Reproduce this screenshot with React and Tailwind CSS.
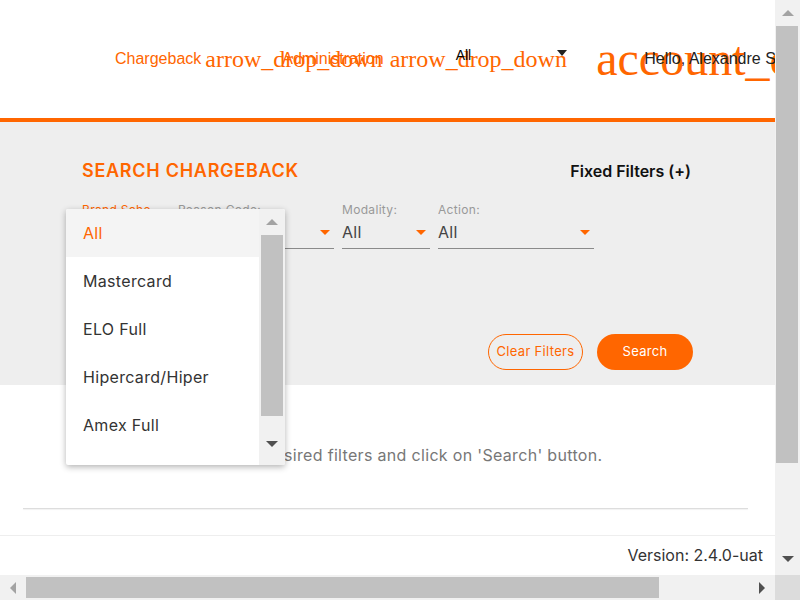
const ORANGE = '#ff6600'

const OPTIONS = ['All', 'Mastercard', 'ELO Full', 'Hipercard/Hiper', 'Amex Full']

const FILTERS = [
  { label: 'Brand Scheme:', width: 'w-[88px]', active: true },
  { label: 'Reason Code:', width: 'w-[156px]' },
  { label: 'Modality:', width: 'w-[88px]' },
  { label: 'Action:', width: 'w-[156px]' },
]

function Tri({ dir = 'down', color, w = 10, h = 5 }) {
  const pts = {
    down: `0,0 ${w},0 ${w / 2},${h}`,
    up: `0,${h} ${w},${h} ${w / 2},0`,
    left: `${w},0 ${w},${h} 0,${h / 2}`,
    right: `0,0 0,${h} ${w},${h / 2}`,
  }[dir]
  return (
    <svg width={w} height={h} viewBox={`0 0 ${w} ${h}`} className="block shrink-0">
      <polygon points={pts} fill={color} />
    </svg>
  )
}

function Header() {
  return (
    <header className="flex h-[122px] shrink-0 items-center border-b-4 border-[#ff6600] bg-white font-['Liberation_Sans',Arial,sans-serif] tracking-normal whitespace-nowrap">
      <span className="ml-[115px] text-[16px] leading-none text-[#ff6600]">Chargeback</span>
      <span className="ml-[4px] w-[24px] font-['Liberation_Serif',serif] text-[24px] leading-none text-[#ff6600]">
        arrow_drop_down
      </span>
      <span className="ml-[53px] text-[16px] leading-none text-[#ff6600]">Administration</span>
      <span className="ml-[6px] w-[24px] font-['Liberation_Serif',serif] text-[24px] leading-none text-[#ff6600]">
        arrow_drop_down
      </span>
      <span className="mb-[8px] ml-[42px] text-[14px] leading-none text-black">All</span>
      <span className="mb-[12px] ml-[86px]">
        <Tri color="#222" w={10} h={6} />
      </span>
      <span className="ml-[15px] h-[46px] w-px bg-[#e2e2e2]" />
      <span className="ml-[14px] w-[48px] font-['Liberation_Serif',serif] text-[48px] leading-none text-[#ff6600]">
        account_circle
      </span>
      <span className="text-[16px] leading-none text-[#222]">Hello, Alexandre Silva</span>
    </header>
  )
}

function FilterField({ field }) {
  return (
    <div className={field.width}>
      <p className={`truncate text-[12px] leading-[16px] ${field.active ? 'text-[#ff6600]' : 'text-[#999]'}`}>
        {field.label}
      </p>
      <div className="flex items-center justify-between border-b border-[#8a8a8a] pt-[2px] pb-[4px] pr-[4px]">
        <span className="text-[16px] leading-[24px] text-[#444]">All</span>
        <Tri color={ORANGE} w={10} h={5} />
      </div>
    </div>
  )
}

function SearchPanel() {
  return (
    <section className="h-[263px] shrink-0 bg-[#eeeeee] pt-[37px]">
      <div className="flex items-center justify-between pl-[82px] pr-[84px]">
        <h2 className="text-[18px] font-semibold leading-[24px] tracking-[0.04em] text-[#ff6600]">
          SEARCH CHARGEBACK
        </h2>
        <span className="text-[16px] font-semibold leading-[24px] tracking-normal text-[#111]">
          Fixed Filters (+)
        </span>
      </div>
      <div className="mt-[19px] flex gap-2 pl-[82px]">
        {FILTERS.map((f) => (
          <FilterField key={f.label} field={f} />
        ))}
      </div>
      <div className="mt-[85px] flex justify-end gap-[14px] pr-[82px]">
        <button
          type="button"
          className="h-[36px] w-[95px] rounded-full border border-[#ff6600] text-[13px] text-[#ff6600]"
        >
          Clear Filters
        </button>
        <button type="button" className="h-[36px] w-[96px] rounded-full bg-[#ff6600] text-[13px] text-white">
          Search
        </button>
      </div>
    </section>
  )
}

function OptionsMenu() {
  return (
    <div className="absolute left-[66px] top-[209px] flex h-[256px] w-[219px] overflow-hidden rounded-[2px] bg-white shadow-[0_2px_6px_rgba(0,0,0,0.3)]">
      <ul className="flex-1">
        {OPTIONS.map((opt, i) => (
          <li
            key={opt}
            className={`flex h-12 items-center pl-[17px] text-[16px] ${
              i === 0 ? 'bg-[#f4f4f4] text-[#ff6600]' : 'text-[#333]'
            }`}
          >
            {opt}
          </li>
        ))}
      </ul>
      <div className="flex w-[26px] flex-col items-center bg-[#f1f1f1]">
        <div className="flex h-[26px] items-center">
          <Tri dir="up" color="#a3a3a3" w={12} h={6} />
        </div>
        <div className="h-[181px] w-[22px] bg-[#c1c1c1]" />
        <div className="flex flex-1 items-center pt-[6px]">
          <Tri dir="down" color="#505050" w={12} h={6} />
        </div>
      </div>
    </div>
  )
}

function Results() {
  return (
    <section className="h-[150px] shrink-0 bg-white pt-[58px]">
      <p className="pl-[8px] text-center text-[16px] leading-[24px] text-[#777] whitespace-nowrap">
        Select the desired filters and click on 'Search' button.
      </p>
      <div className="ml-[23px] mr-[27px] mt-[41px] h-px bg-[#dddddd] shadow-[0_1px_1px_rgba(0,0,0,0.06)]" />
    </section>
  )
}

function Footer() {
  return (
    <footer className="flex h-[40px] shrink-0 justify-end border-t border-[#eeeeee] bg-white pr-[12px] pt-[7px]">
      <span className="text-[16px] leading-[24px] tracking-normal text-[#333]">Version: 2.4.0-uat</span>
    </footer>
  )
}

function VScrollbar() {
  return (
    <div className="flex w-[25px] shrink-0 flex-col items-center bg-[#f1f1f1]">
      <div className="flex h-[26px] items-center">
        <Tri dir="up" color="#a3a3a3" w={12} h={6} />
      </div>
      <div className="ml-[-1px] h-[437px] w-[22px] bg-[#c1c1c1]" />
      <div className="flex flex-1 items-end pb-[13px]">
        <Tri dir="down" color="#505050" w={12} h={6} />
      </div>
    </div>
  )
}

function HScrollbar() {
  return (
    <div className="flex h-[25px] shrink-0">
      <div className="flex w-[775px] items-center bg-[#f1f1f1]">
        <div className="flex w-[26px] justify-center">
          <Tri dir="left" color="#a3a3a3" w={6} h={12} />
        </div>
        <div className="h-[21px] w-[633px] bg-[#c1c1c1]" />
        <div className="flex flex-1 justify-end pr-[10px]">
          <Tri dir="right" color="#505050" w={6} h={12} />
        </div>
      </div>
      <div className="w-[25px] bg-[#dcdcdc]" />
    </div>
  )
}

export default function App() {
  return (
    <div className="flex h-[600px] w-[800px] flex-col overflow-hidden bg-white font-['Inter',sans-serif] tracking-[0.02em]">
      <div className="flex min-h-0 flex-1">
        <main className="relative flex w-[775px] flex-col overflow-hidden">
          <Header />
          <SearchPanel />
          <Results />
          <Footer />
          <OptionsMenu />
        </main>
        <VScrollbar />
      </div>
      <HScrollbar />
    </div>
  )
}
